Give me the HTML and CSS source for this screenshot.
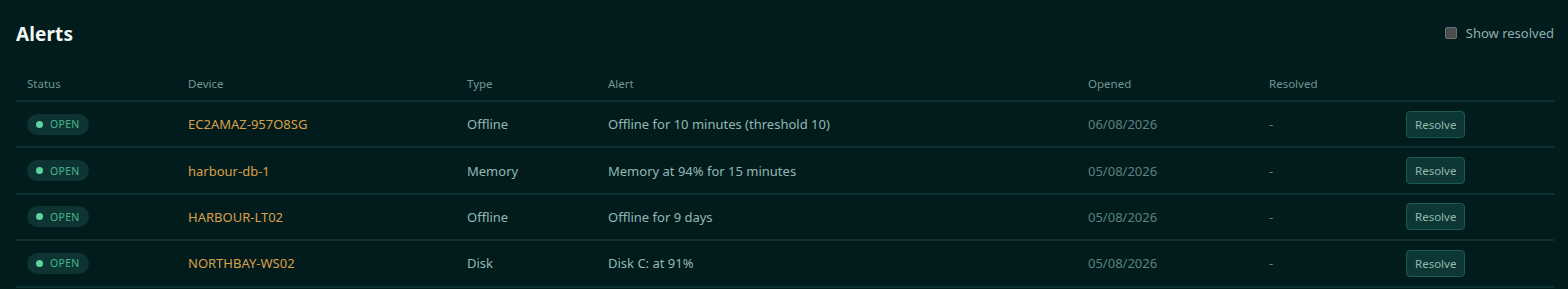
FILE: index.html
```html
<!DOCTYPE html>
<html>
<head>
<meta charset="utf-8">
<link rel="stylesheet" href="styles.css">
</head>
<body>
<div class="page">
  <div class="head">
    <h1 class="title">Alerts</h1>
    <label class="toggle"><span class="box"></span><span>Show resolved</span></label>
  </div>
  <table class="alerts">
    <colgroup>
      <col class="c1"><col class="c2"><col class="c3"><col class="c4"><col class="c5"><col class="c6"><col class="c7">
    </colgroup>
    <thead>
      <tr><th>Status</th><th>Device</th><th>Type</th><th>Alert</th><th>Opened</th><th>Resolved</th><th></th></tr>
    </thead>
    <tbody>
      <tr>
        <td><span class="badge"><span class="dot"></span>OPEN</span></td>
        <td class="dev">EC2AMAZ-957O8SG</td>
        <td>Offline</td>
        <td>Offline for 10 minutes (threshold 10)</td>
        <td class="muted">06/08/2026</td>
        <td class="muted">-</td>
        <td><button class="btn">Resolve</button></td>
      </tr>
      <tr>
        <td><span class="badge"><span class="dot"></span>OPEN</span></td>
        <td class="dev">harbour-db-1</td>
        <td>Memory</td>
        <td>Memory at 94% for 15 minutes</td>
        <td class="muted">05/08/2026</td>
        <td class="muted">-</td>
        <td><button class="btn">Resolve</button></td>
      </tr>
      <tr>
        <td><span class="badge"><span class="dot"></span>OPEN</span></td>
        <td class="dev">HARBOUR-LT02</td>
        <td>Offline</td>
        <td>Offline for 9 days</td>
        <td class="muted">05/08/2026</td>
        <td class="muted">-</td>
        <td><button class="btn">Resolve</button></td>
      </tr>
      <tr>
        <td><span class="badge"><span class="dot"></span>OPEN</span></td>
        <td class="dev">NORTHBAY-WS02</td>
        <td>Disk</td>
        <td>Disk C: at 91%</td>
        <td class="muted">05/08/2026</td>
        <td class="muted">-</td>
        <td><button class="btn">Resolve</button></td>
      </tr>
    </tbody>
  </table>
</div>
</body>
</html>
```
FILE: styles.css
```css
html, body {
  margin: 0;
  padding: 0;
  background: #021c1e;
  font-family: "Noto Sans", "Open Sans", sans-serif;
}
.page {
  padding: 21px 14px 0 16px;
}
.head {
  display: flex;
  align-items: center;
  justify-content: space-between;
  height: 26px;
}
.title {
  margin: 0;
  font-size: 19px;
  font-weight: 700;
  color: #f2f7f6;
  letter-spacing: 0.1px;
}
.toggle {
  display: flex;
  align-items: center;
  gap: 9px;
  font-size: 13px;
  color: #8fb0ab;
  margin-top: -3px;
}
.box {
  width: 10px;
  height: 10px;
  border: 1px solid #6a6f70;
  border-radius: 2px;
  background: #4a4d4e;
}
.alerts {
  width: 100%;
  border-collapse: collapse;
  table-layout: fixed;
  margin-top: 18px;
}
.c1 { width: 161px; }
.c2 { width: 279px; }
.c3 { width: 141px; }
.c4 { width: 480px; }
.c5 { width: 181px; }
.c6 { width: 137px; }
th {
  text-align: left;
  font-weight: 400;
  font-size: 11.5px;
  color: #6f9692;
  padding: 2px 11px 0;
  height: 33px;
  vertical-align: middle;
  border-bottom: 2px solid #0b3133;
}
td {
  font-size: 13px;
  color: #93b8b3;
  padding: 0 11px;
  height: 44.4px;
  vertical-align: middle;
  border-bottom: 2px solid #0b3133;
}
td.dev { color: #d8a048; }
td.muted { color: #5b827d; }
.badge {
  display: inline-flex;
  align-items: center;
  gap: 7px;
  height: 21px;
  padding: 0 9px 0 9px;
  border-radius: 11px;
  background: #0d3432;
  color: #45b48c;
  font-size: 10.5px;
  letter-spacing: 0.3px;
}
.dot {
  width: 7px;
  height: 7px;
  border-radius: 50%;
  background: #5cd4a2;
}
.btn {
  font-family: inherit;
  height: 27px;
  padding: 0 8px;
  background: #0d3734;
  border: 1px solid #1b5a52;
  border-radius: 4px;
  color: #95b8b2;
  font-size: 11.5px;
}
```
